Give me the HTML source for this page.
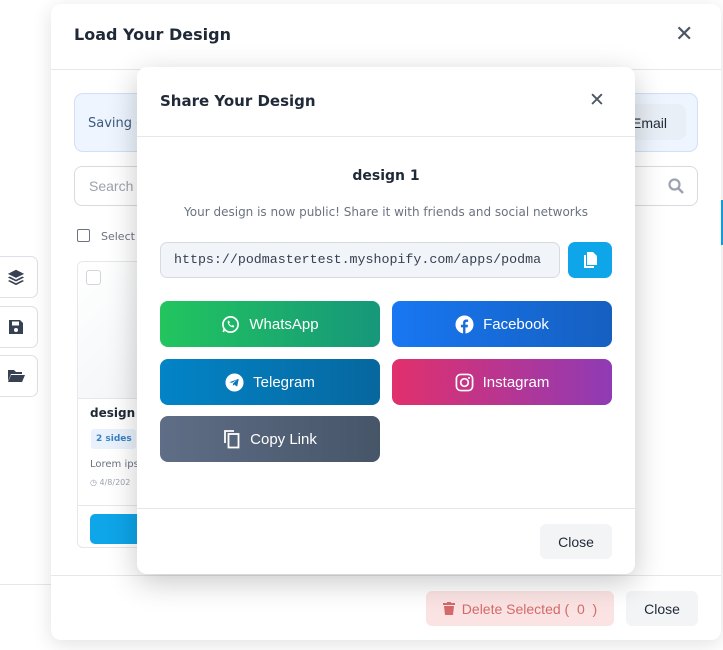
<!DOCTYPE html>
<html><head><meta charset="utf-8"><style>
*{box-sizing:border-box;margin:0;padding:0}
body{width:723px;height:650px;overflow:hidden;background:#fff;font-family:"Liberation Sans",sans-serif;position:relative}
.abs{position:absolute}
.side{position:absolute;left:-6px;width:44px;height:42px;background:#fff;border:1px solid #dde1e6;border-radius:7px;display:flex;align-items:center;justify-content:center}
.outer{position:absolute;left:51px;top:4px;width:670px;height:636px;background:#fff;border-radius:10px;box-shadow:0 4px 20px rgba(0,0,0,.12)}
.inner{position:absolute;left:137px;top:67px;width:498px;height:507px;background:#fff;border-radius:10px;box-shadow:0 8px 30px rgba(0,0,0,.22)}
.btn{position:absolute;width:220px;height:46px;border-radius:8px;color:#fff;font-size:15px;display:flex;align-items:center;justify-content:center;gap:9px}
.dj{font-family:"DejaVu Sans",sans-serif}
</style></head><body>
<div class="abs" style="left:0;top:584px;width:51px;height:1px;background:#e5e7eb"></div>
<div class="abs" style="left:720px;top:200px;width:3px;height:45px;background:#0ea5e9"></div>
<div class="side" style="top:256px"><svg width="18" height="18" viewBox="0 0 20 20"><path d="M10 2 1 6.5 10 11l9-4.5z" fill="#374151"/><path d="M3 9.5 1 10.5 10 15l9-4.5-2-1-7 3.5z" fill="#374151"/><path d="M3 13.5 1 14.5 10 19l9-4.5-2-1-7 3.5z" fill="#374151"/></svg></div>
<div class="side" style="top:306px"><svg width="16" height="16" viewBox="0 0 16 16"><path d="M1 1h11l3 3v11H1z" fill="#374151"/><rect x="4" y="2.5" width="7" height="4" fill="#fff"/><circle cx="8" cy="11" r="2" fill="#fff"/></svg></div>
<div class="side" style="top:355px"><svg width="18" height="16" viewBox="0 0 18 16"><path d="M1 2h6l2 2h6v2H4L1 13z" fill="#374151"/><path d="M4 7h14l-3 7H1z" fill="#374151"/></svg></div>

<div class="outer">
 <div class="abs dj" style="left:23px;top:21px;font-size:16px;font-weight:bold;color:#1f2937">Load Your Design</div>
 <div class="abs" style="left:624px;top:17px;font-size:22px;color:#4b5563">✕</div>
 <div class="abs" style="left:0;top:65px;width:670px;height:1px;background:#e5e7eb"></div>
 <div class="abs" style="left:23px;top:89px;width:624px;height:59px;background:#eef5fe;border:1px solid #cfe0f7;border-radius:9px"></div>
 <div class="abs dj" style="left:37px;top:112px;font-size:13px;color:#3d5a80">Saving c</div>
 <div class="abs" style="left:560px;top:100px;width:75px;height:36px;background:#e9eff6;border-radius:8px"></div>
 <div class="abs" style="left:581px;top:111px;font-size:14px;color:#1f2937">Email</div>
 <div class="abs" style="left:23px;top:162px;width:624px;height:40px;border:1px solid #d6dbe1;border-radius:8px"></div>
 <div class="abs" style="left:38px;top:174px;font-size:14px;color:#9ca3af">Search d</div>
 <svg class="abs" style="left:617px;top:174px" width="16" height="16" viewBox="0 0 16 16"><circle cx="6.5" cy="6.5" r="5" stroke="#9ca3af" stroke-width="2.2" fill="none"/><path d="M10 10l5 5" stroke="#9ca3af" stroke-width="2.5"/></svg>
 <div class="abs" style="left:26px;top:225px;width:13px;height:13px;border:1px solid #6b7280;border-radius:2px"></div>
 <div class="abs dj" style="left:50px;top:226px;font-size:11px;color:#6b7280">Select</div>
 <div class="abs" style="left:26px;top:257px;width:100px;height:287px;border:1px solid #e5e7eb;border-radius:6px;overflow:hidden">
  <div style="height:136px;background:linear-gradient(135deg,#fff,#f1f3f6)"></div>
  <div style="border-top:1px solid #e5e7eb"></div>
 </div>
 <div class="abs" style="left:35px;top:266px;width:15px;height:15px;border:1px solid #d1d5db;border-radius:3px;background:#fff"></div>
 <div class="abs dj" style="left:39px;top:402px;font-size:12px;font-weight:bold;color:#1f2937">design 1</div>
 <div class="abs dj" style="left:40px;top:425px;width:45px;height:20px;background:#e9f2fc;border-radius:3px;font-size:9px;font-weight:bold;color:#3b82c4;padding:5px 0 0 5px">2 sides</div>
 <div class="abs dj" style="left:39px;top:455px;font-size:10px;color:#6b7280">Lorem ips</div>
 <div class="abs dj" style="left:39px;top:474px;font-size:8px;color:#9ca3af">◷ 4/8/202</div>
 <div class="abs" style="left:27px;top:501px;width:98px;height:1px;background:#e5e7eb"></div>
 <div class="abs" style="left:39px;top:510px;width:60px;height:30px;background:#0ea5e9;border-radius:5px"></div>
 <div class="abs" style="left:0;top:571px;width:670px;height:1px;background:#e5e7eb"></div>
 <div class="abs" style="left:375px;top:587px;width:188px;height:35px;background:#fbe3e3;border-radius:6px;color:#d46a6a;font-size:14px;display:flex;align-items:center;justify-content:center;gap:7px">
  <svg width="12" height="13" viewBox="0 0 12 13"><rect x="0" y="1" width="12" height="2" fill="#d46a6a"/><rect x="4" y="0" width="4" height="2" fill="#d46a6a"/><path d="M1 4h10l-1 9H2z" fill="#d46a6a"/></svg>Delete Selected (&nbsp; 0 &nbsp;)</div>
 <div class="abs" style="left:575px;top:587px;width:72px;height:35px;background:#f3f4f6;border-radius:6px;font-size:14px;color:#1f2937;display:flex;align-items:center;justify-content:center">Close</div>
</div>

<div class="inner">
 <div class="abs dj" style="left:23px;top:25px;font-size:15px;font-weight:bold;color:#1f2937">Share Your Design</div>
 <div class="abs" style="left:452px;top:22px;font-size:19px;color:#4b5563">✕</div>
 <div class="abs" style="left:0;top:69px;width:498px;height:1px;background:#e5e7eb"></div>
 <div class="abs dj" style="left:0;top:101px;width:498px;text-align:center;font-size:14px;font-weight:bold;color:#1f2937">design 1</div>
 <div class="abs dj" style="left:0;top:138px;width:498px;text-align:center;font-size:12px;color:#6b7280">Your design is now public! Share it with friends and social networks</div>
 <div class="abs" style="left:23px;top:175px;width:400px;height:36px;background:#f1f4f8;border:1px solid #d6dbe1;border-radius:7px;overflow:hidden;font-family:'Liberation Mono',monospace;font-size:13.3px;color:#374151;padding:9px 0 0 13px;white-space:nowrap">https://podmastertest.myshopify.com/apps/podma</div>
 <div class="abs" style="left:431px;top:175px;width:44px;height:36px;background:#0ea5e9;border-radius:7px;display:flex;align-items:center;justify-content:center"><svg width="13" height="16" viewBox="0 0 13 16"><path d="M3 0h6l4 4v9H3z" fill="#fff"/><path d="M0 3h2v11h8v2H0z" fill="#fff"/></svg></div>

 <div class="btn" style="left:23px;top:234px;background:linear-gradient(90deg,#22c55e,#16977a)"><svg width="19" height="19" viewBox="0 0 20 20"><circle cx="10" cy="10" r="8" stroke="#fff" stroke-width="1.8" fill="none"/><path d="M2.5 18 3.5 14" stroke="#fff" stroke-width="1.8"/><path d="M7 6.5c0 4 2.5 6.5 6.5 6.5l.5-1.5-2-1-1 .8c-1-.5-2-1.5-2.5-2.5l.8-1-1-2z" fill="#fff"/></svg>WhatsApp</div>
 <div class="btn" style="left:255px;top:234px;background:linear-gradient(90deg,#1877f2,#155fc0)"><svg width="19" height="19" viewBox="0 0 20 20"><circle cx="10" cy="10" r="9.5" fill="#fff"/><path d="M11 20v-7h2.3l.4-2.7H11V8.6c0-.8.3-1.3 1.4-1.3h1.4V4.9c-.3 0-1.1-.1-2-.1-2 0-3.3 1.2-3.3 3.4v2.1H6.2V13h2.3v7z" fill="#1a6edc"/></svg>Facebook</div>
 <div class="btn" style="left:23px;top:292px;background:linear-gradient(90deg,#0284c7,#07679e)"><svg width="19" height="19" viewBox="0 0 20 20"><circle cx="10" cy="10" r="9.5" fill="#fff"/><path d="M4.5 9.8 14.5 6l-1.7 8.3-3-2.2-1.5 1.4.2-2.5 4.3-4-5.3 3.3z" fill="#0477b8"/></svg>Telegram</div>
 <div class="btn" style="left:255px;top:292px;background:linear-gradient(90deg,#e1306c,#8f3bb5)"><svg width="19" height="19" viewBox="0 0 20 20"><rect x="1.5" y="1.5" width="17" height="17" rx="4.5" stroke="#fff" stroke-width="1.8" fill="none"/><circle cx="10" cy="10" r="4" stroke="#fff" stroke-width="1.8" fill="none"/><circle cx="14.8" cy="5.2" r="1.1" fill="#fff"/></svg>Instagram</div>
 <div class="btn" style="left:23px;top:349px;background:linear-gradient(90deg,#5f6d86,#475569)"><svg width="18" height="20" viewBox="0 0 18 20"><path d="M2 14V2h9" stroke="#fff" stroke-width="1.8" fill="none"/><rect x="5.5" y="5" width="10" height="13.5" stroke="#fff" stroke-width="1.8" fill="none"/></svg>Copy Link</div>

 <div class="abs" style="left:0;top:441px;width:498px;height:1px;background:#e5e7eb"></div>
 <div class="abs" style="left:403px;top:457px;width:72px;height:35px;background:#f3f4f6;border-radius:6px;font-size:14px;color:#1f2937;display:flex;align-items:center;justify-content:center">Close</div>
</div>
</body></html>
